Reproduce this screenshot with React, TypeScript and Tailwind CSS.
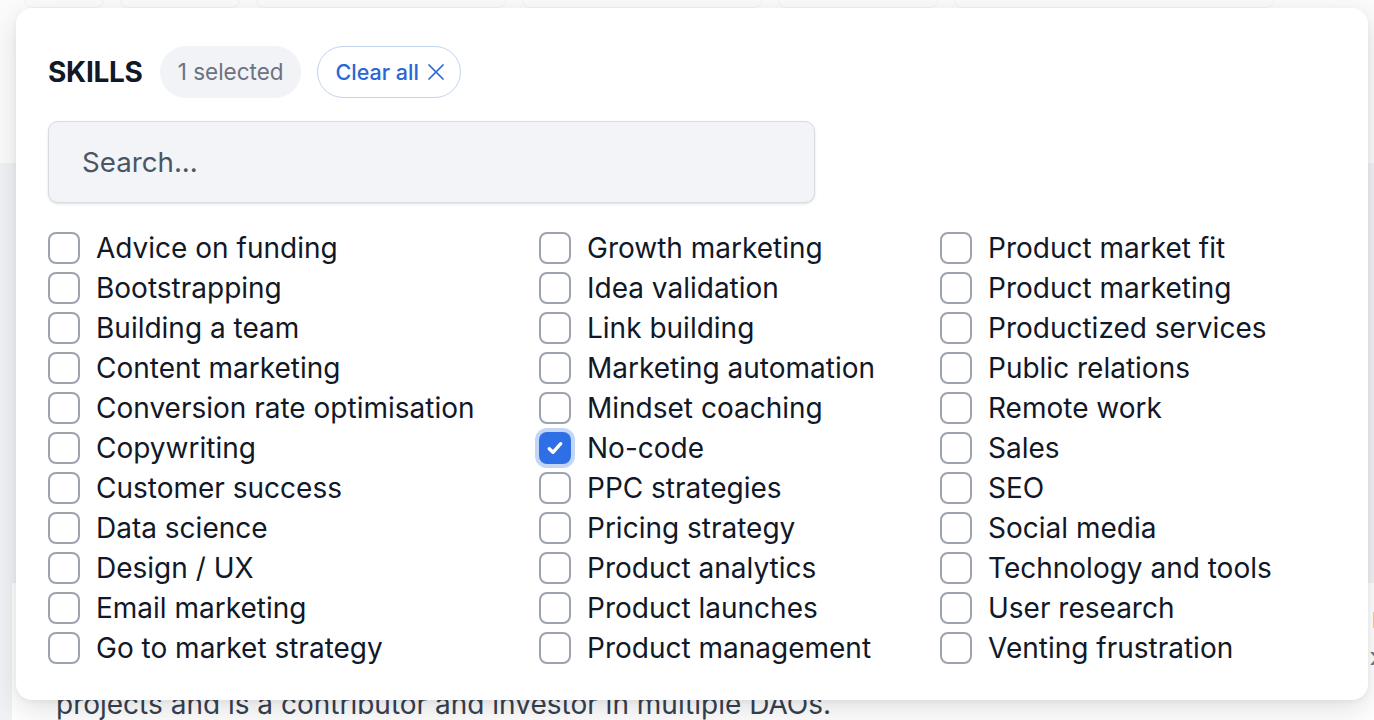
import { X } from "lucide-react";

const columns: string[][] = [
  [
    "Advice on funding",
    "Bootstrapping",
    "Building a team",
    "Content marketing",
    "Conversion rate optimisation",
    "Copywriting",
    "Customer success",
    "Data science",
    "Design / UX",
    "Email marketing",
    "Go to market strategy",
  ],
  [
    "Growth marketing",
    "Idea validation",
    "Link building",
    "Marketing automation",
    "Mindset coaching",
    "No-code",
    "PPC strategies",
    "Pricing strategy",
    "Product analytics",
    "Product launches",
    "Product management",
  ],
  [
    "Product market fit",
    "Product marketing",
    "Productized services",
    "Public relations",
    "Remote work",
    "Sales",
    "SEO",
    "Social media",
    "Technology and tools",
    "User research",
    "Venting frustration",
  ],
];

const selected = ["No-code"];

function Checkbox({ checked }: { checked: boolean }) {
  if (checked) {
    return (
      <span className="flex h-8 w-8 shrink-0 items-center justify-center rounded-lg bg-[#2f6fe6] ring-4 ring-[#c3d6f8]">
        <svg viewBox="0 0 20 20" className="h-6 w-6" fill="none">
          <path d="M5.2 10.6l3.1 3 6.5-7.2" stroke="white" strokeWidth="2.8" strokeLinecap="round" strokeLinejoin="round" />
        </svg>
      </span>
    );
  }
  return <span className="h-8 w-8 shrink-0 rounded-lg border-2 border-[#9ca3af] bg-white" />;
}

export default function App() {
  return (
    <div className="relative h-[720px] w-[1374px] overflow-hidden bg-[#f1f2f5] font-['Inter',sans-serif]">
      {/* page behind the popover */}
      <div className="h-[163px] bg-[#fbfbfb]">
        <div className="flex h-2 gap-4 px-6">
          <div className="w-[80px] rounded-b-2xl border border-t-0 border-[#f2f2f2]" />
          <div className="w-[120px] rounded-b-2xl border border-t-0 border-[#f2f2f2]" />
          <div className="w-[250px] rounded-b-full border border-t-0 border-[#f2f2f2]" />
          <div className="w-[240px] rounded-b-full border border-t-0 border-[#f2f2f2]" />
          <div className="w-[160px] rounded-b-2xl border border-t-0 border-[#f2f2f2]" />
          <div className="w-[320px] rounded-b-2xl border border-t-0 border-[#f2f2f2]" />
        </div>
      </div>
      <div className="ml-3 mt-[420px] h-[200px] bg-white pl-11 pt-[100px] text-[28px] text-[#374151]">
        projects and is a contributor and investor in multiple DAOs.
        <div className="absolute right-[-8px] top-[600px] text-[28px] leading-[36px] text-[#6b7280]">r</div>
        <div className="absolute right-[-6px] top-[636px] text-[28px] text-[#6b7280]">›</div>
      </div>

      {/* popover */}
      <div className="absolute left-4 top-2 w-[1352px] rounded-2xl bg-white px-8 pb-8 pt-[38px] shadow-[0_10px_30px_rgba(0,0,0,0.12),0_2px_6px_rgba(0,0,0,0.05)]">
        <div className="flex h-[52px] items-center">
          <h2 className="mr-[17px] text-[28px] font-bold tracking-[-0.01em] text-[#111827]">SKILLS</h2>
          <span className="flex h-[52px] items-center rounded-full bg-[#f1f3f7] pl-[18px] pr-[17px] text-[22.5px] text-[#6b7280]">
            {selected.length} selected
          </span>
          <button className="ml-4 flex h-[52px] items-center gap-[3px] rounded-full border border-[#c3d4ee] pl-[18px] pr-[10px] text-[21.5px] font-medium text-[#2b66d6]">
            Clear all
            <X className="h-[28px] w-[28px]" strokeWidth={1.5} />
          </button>
        </div>

        <input
          type="text"
          placeholder="Search..."
          className="mt-[23px] h-[82px] w-[767px] rounded-[10px] border border-[#d7dbe2] bg-[#f2f4f7] px-[33px] text-[27.7px] text-[#111827] shadow-sm outline-none placeholder:text-[#4b5563]"
        />

        <div className="mt-[25px] grid grid-cols-[491px_401px_auto]">
          {columns.map((col, ci) => (
            <div key={ci} className="flex flex-col">
              {col.map((label) => (
                <label key={label} className="flex h-10 items-center gap-4 text-[28px] text-[#111827]">
                  <Checkbox checked={selected.includes(label)} />
                  <span>{label}</span>
                </label>
              ))}
            </div>
          ))}
        </div>
      </div>
    </div>
  );
}
